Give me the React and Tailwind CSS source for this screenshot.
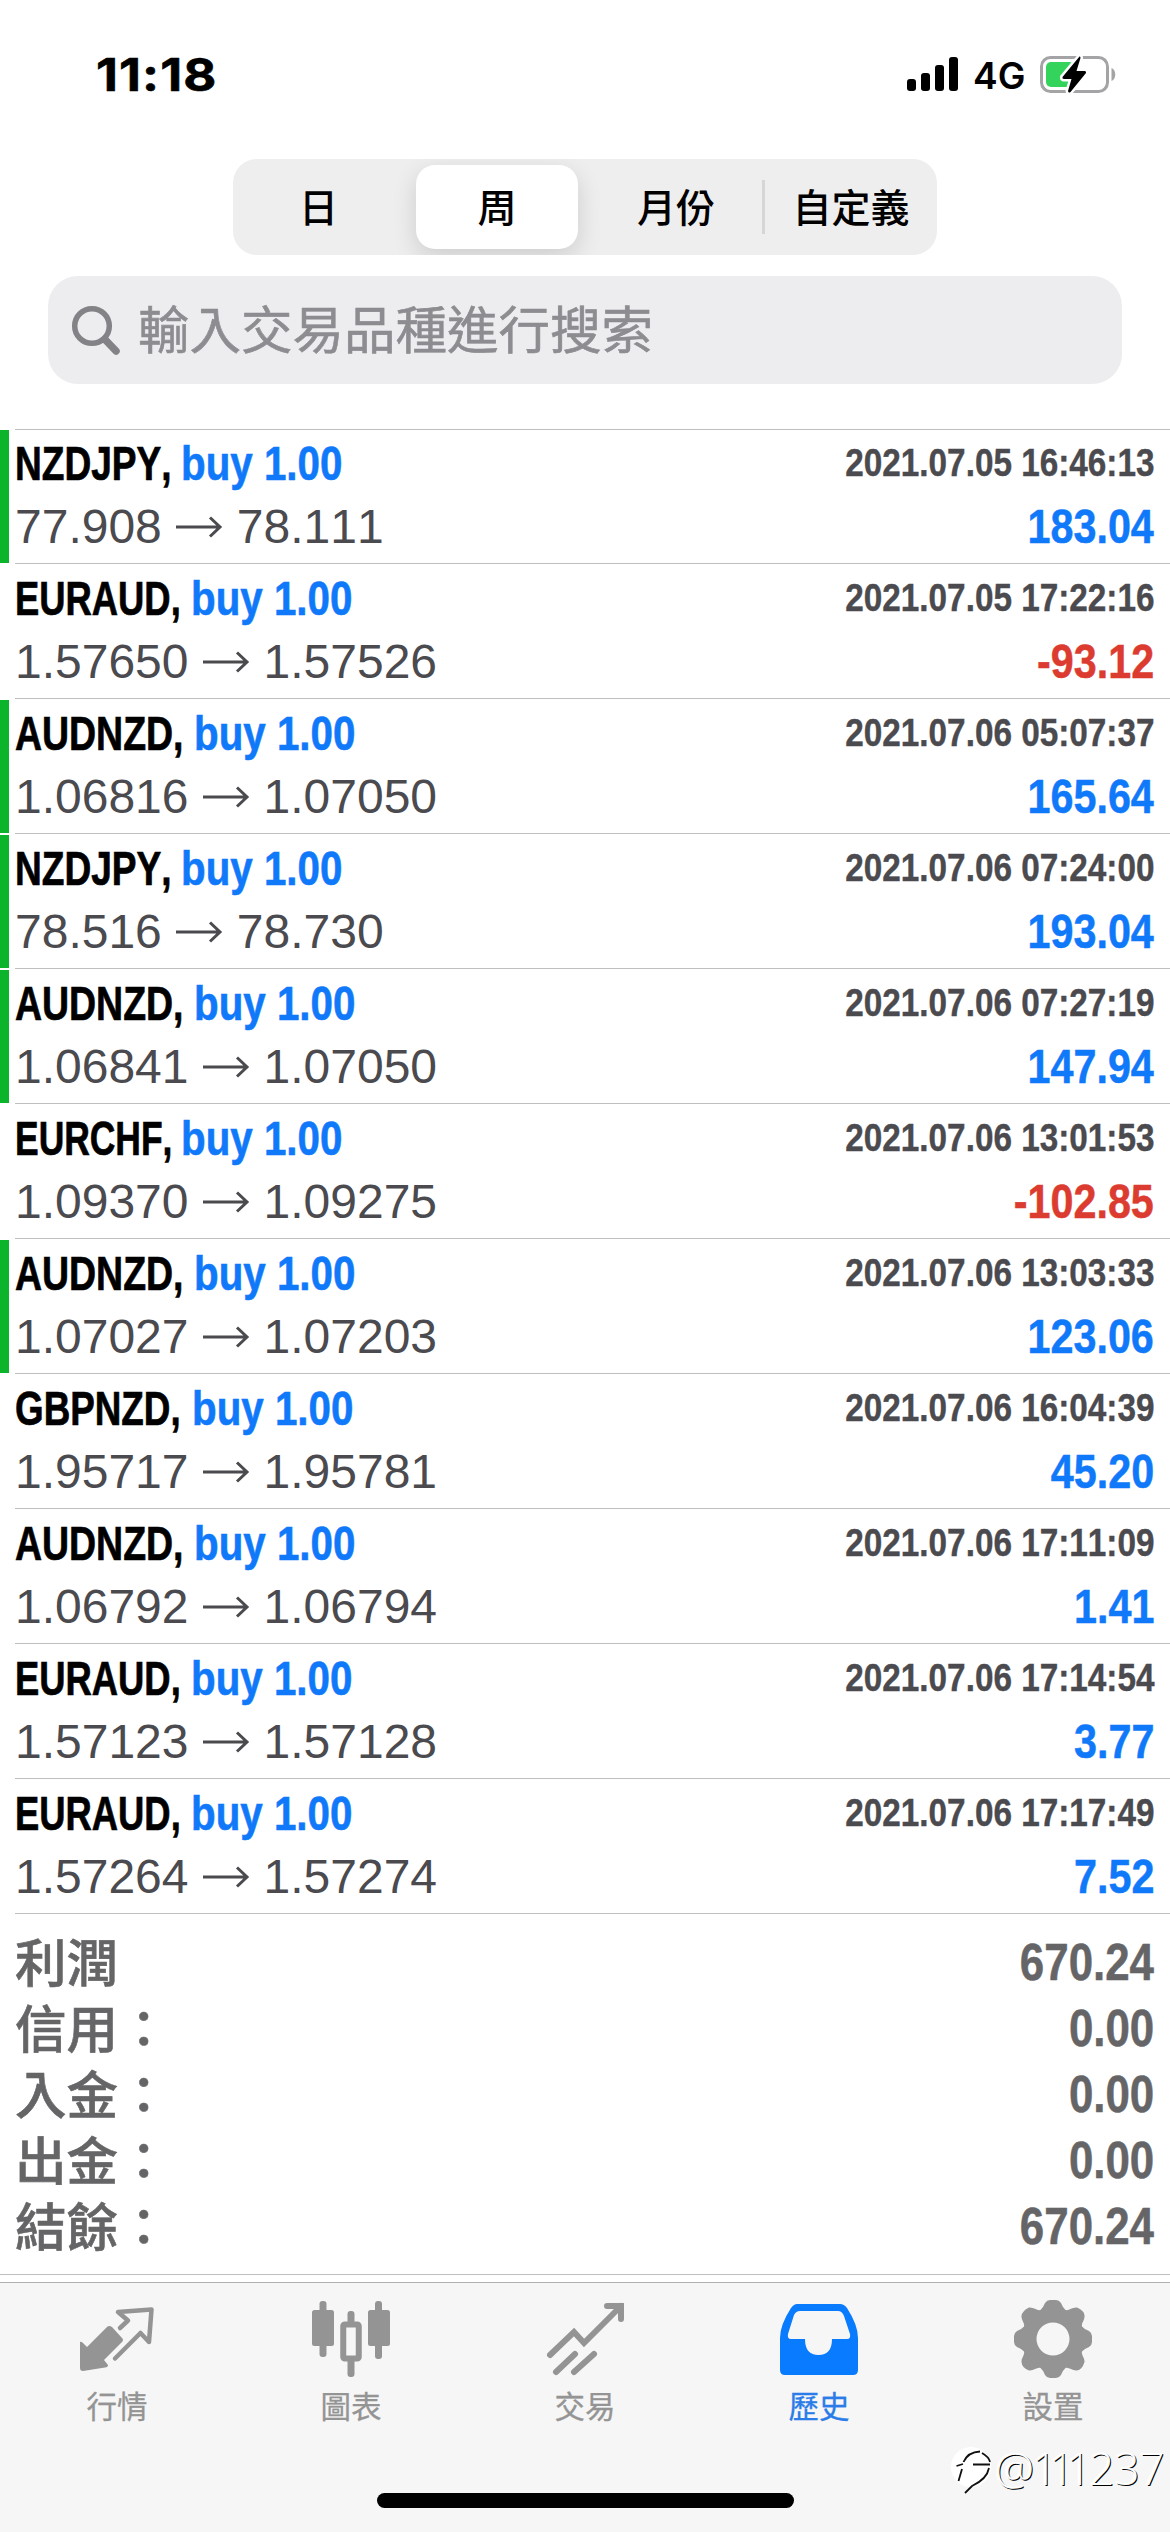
import React from "react";

const trades = [
  ["NZDJPY", "77.908", "78.111", "2021.07.05 16:46:13", "183.04", true],
  ["EURAUD", "1.57650", "1.57526", "2021.07.05 17:22:16", "-93.12", false],
  ["AUDNZD", "1.06816", "1.07050", "2021.07.06 05:07:37", "165.64", true],
  ["NZDJPY", "78.516", "78.730", "2021.07.06 07:24:00", "193.04", true],
  ["AUDNZD", "1.06841", "1.07050", "2021.07.06 07:27:19", "147.94", true],
  ["EURCHF", "1.09370", "1.09275", "2021.07.06 13:01:53", "-102.85", false],
  ["AUDNZD", "1.07027", "1.07203", "2021.07.06 13:03:33", "123.06", true],
  ["GBPNZD", "1.95717", "1.95781", "2021.07.06 16:04:39", "45.20", false],
  ["AUDNZD", "1.06792", "1.06794", "2021.07.06 17:11:09", "1.41", false],
  ["EURAUD", "1.57123", "1.57128", "2021.07.06 17:14:54", "3.77", false],
  ["EURAUD", "1.57264", "1.57274", "2021.07.06 17:17:49", "7.52", false],
];

const symbolWidth = {
  NZDJPY: "w-[166px]",
  EURAUD: "w-[176px]",
  AUDNZD: "w-[179px]",
  EURCHF: "w-[166px]",
  GBPNZD: "w-[177px]",
};

const symbolScale = {
  NZDJPY: "scale-x-[0.772]",
  EURAUD: "scale-x-[0.758]",
  AUDNZD: "scale-x-[0.78]",
  EURCHF: "scale-x-[0.738]",
  GBPNZD: "scale-x-[0.767]",
};

const totals = [
  ["利潤", "670.24"],
  ["信用：", "0.00"],
  ["入金：", "0.00"],
  ["出金：", "0.00"],
  ["結餘：", "670.24"],
];

function StatusBar() {
  return (
    <header className="flex h-[159px] items-start justify-between pl-[96px] pr-[54px]">
      <div className="mt-[47px] origin-left scale-x-[1.13] font-['Inter',sans-serif] text-[45px] font-bold leading-[56px] tracking-[1px] text-black [-webkit-text-stroke:0.6px_#000]">11:18</div>
      <div className="mt-[55px] flex items-start">
        <svg className="mt-[2px]" width="52" height="34" viewBox="0 0 52 34">
          <rect x="0" y="22" width="9" height="12" rx="3" />
          <rect x="14" y="16" width="9" height="18" rx="3" />
          <rect x="28" y="8" width="9" height="26" rx="3" />
          <rect x="42" y="0" width="9" height="34" rx="3" />
        </svg>
        <span className="ml-[14px] w-[67px] font-['Inter',sans-serif] text-[37px] font-semibold leading-[42px] text-black">4G</span>
        <svg width="76" height="40" viewBox="0 0 76 40">
          <rect x="1.5" y="2.5" width="66" height="34" rx="9" fill="none" stroke="#a4a4a6" strokeWidth="3" />
          <path d="M71.500 13 C76.500 15 76.500 24 71.500 26 Z" fill="#a4a4a6" />
          <rect x="6" y="7" width="28" height="25" rx="5" fill="#34d45c" />
          <path d="M39.500 1.500 L22.500 22 Q22 24 24 24 H31.500 L28 36 Q28.500 38.500 30.500 37 L46 18 Q46.500 16 44.500 16 H36.500 L40.500 3 Q40.500 1 39.500 1.500 Z" fill="#000" stroke="#fff" strokeWidth="5" paintOrder="stroke" />
        </svg>
      </div>
    </header>
  );
}

function Segments() {
  return (
    <div className="mx-auto flex h-[96px] w-[704px] items-center overflow-hidden rounded-[24px] bg-[#eeeeee] text-[39px] font-medium leading-[58px] text-black">
      <div className="w-[183px] pb-[4px] pr-[12px] text-center">日</div>
      <div className="flex h-[84px] w-[162px] items-center justify-center rounded-[19px] bg-white pb-[4px] shadow-[0_8px_24px_rgba(0,0,0,0.14)]">周</div>
      <div className="w-[184px] pb-[4px] pl-[12px] text-center">月份</div>
      <div className="h-[54px] w-[3px] bg-[#d6d6d8]" />
      <div className="flex-1 pb-[4px] text-center">自定義</div>
    </div>
  );
}

function Search() {
  return (
    <div className="mx-[48px] mt-[21px] flex h-[108px] items-center rounded-[30px] bg-[#ededef] pl-[23px]">
      <svg width="52" height="58" viewBox="0 0 52 58" fill="none" stroke="#838387">
        <circle cx="21" cy="25" r="17.300" strokeWidth="5.500" />
        <path d="M34 38.500 L45 50" strokeWidth="7.500" strokeLinecap="round" />
      </svg>
      <span className="-mt-[7px] ml-[15px] text-[51.5px] leading-[76px] text-[#8d8d91] [-webkit-text-stroke:0.6px_#8d8d91]">輸入交易品種進行搜索</span>
    </div>
  );
}

function Trade({ row }) {
  const [symbol, from, to, time, profit, marked] = row;
  return (
    <div className="flex h-[135px] font-['Liberation_Sans',Arial,sans-serif]">
      <div className={marked ? "mt-px h-[133px] w-[9px] bg-[#0cb42c]" : "w-[9px]"} />
      <div className="ml-[6px] flex-1 border-b border-[#bfbfc2] pr-[16px] pt-[7px]">
        <div className="flex h-[56px] justify-between whitespace-nowrap font-bold leading-[56px]">
          <div className="flex text-[48px]">
            <div className={symbolWidth[symbol]}>
              <span className={`inline-block origin-left text-black [-webkit-text-stroke:0.7px_#000] [font-kerning:none] ${symbolScale[symbol]}`}>{symbol},</span>
            </div>
            <span className="inline-block origin-left scale-x-[0.84] text-[#0f79fa] [-webkit-text-stroke:0.6px_#0f79fa]">buy 1.00</span>
          </div>
          <span className="mt-[-1px] inline-block origin-right scale-x-[0.865] text-[38.5px] text-[#4a4a4f] [font-kerning:none] [-webkit-text-stroke:0.4px_#4a4a4f]">{time}</span>
        </div>
        <div className="mt-[7px] flex h-[56px] items-center justify-between whitespace-nowrap text-[48px] leading-[56px]">
          <div className="flex items-center text-[#4a4a4f] [font-kerning:none]">
            <span>{from}</span>
            <svg className="ml-[13px] mr-[14px]" width="48" height="22" viewBox="0 0 48 22" fill="none" stroke="currentColor" strokeWidth="3">
              <path d="M1 11 H45 M35 1.500 L45 11 L35 20.500" />
            </svg>
            <span>{to}</span>
          </div>
          <span className={profit.startsWith("-") ? "origin-right scale-x-[0.86] font-bold text-[#dc3b30] [font-kerning:none] [-webkit-text-stroke:0.5px_#dc3b30]" : "origin-right scale-x-[0.86] font-bold text-[#0f79fa] [font-kerning:none] [-webkit-text-stroke:0.5px_#0f79fa]"}>{profit}</span>
        </div>
      </div>
    </div>
  );
}

function Totals() {
  return (
    <section className="h-[361px] border-b border-[#bfbfc2] pl-[15px] pr-[16px] pt-[15px] text-[#656567]">
      {totals.map(([label, value]) => (
        <div key={label} className="flex h-[66px] items-center justify-between leading-[66px]">
          <span className="-mt-[5px] text-[51.5px] font-medium [-webkit-text-stroke:0.6px_#656567]">{label}</span>
          <span className="mt-[2px] origin-right scale-x-[0.86] font-['Liberation_Sans',Arial,sans-serif] text-[51px] font-bold [-webkit-text-stroke:0.5px_#656567]">{value}</span>
        </div>
      ))}
    </section>
  );
}

const icons = {
  quotes: (
    <svg width="78" height="78" viewBox="0 0 78 78" fill="#949494">
      <path d="M2 42 Q3 41 5 43 L9 47 L29 27 Q31 25 34 27 L44 38 Q46 40 44 42 L26 60 L30 65 Q30 67 27 67.500 L5 71 Q2 71 2 68 Z" />
      <path d="M42 28 L50 20.500 L40 12 L73.500 9.500 L71 42 L62.500 33 L37 58.500" fill="none" stroke="#949494" strokeWidth="4.500" strokeLinejoin="round" strokeLinecap="round" />
    </svg>
  ),
  chart: (
    <svg width="78" height="78" viewBox="0 0 78 78" fill="#949494">
      <rect x="7.500" y="1" width="7" height="56" rx="3" />
      <rect x="0" y="10" width="22" height="36" rx="2.500" />
      <rect x="63" y="1" width="7" height="58" rx="3" />
      <rect x="56" y="10" width="22" height="36" rx="2.500" />
      <rect x="35.500" y="11" width="7" height="13" rx="3" />
      <rect x="35.500" y="58" width="7" height="19" rx="3" />
      <rect x="31.250" y="24.500" width="15.500" height="34" rx="1.500" fill="none" stroke="#949494" strokeWidth="6" />
    </svg>
  ),
  trade: (
    <svg width="78" height="78" viewBox="0 0 78 78" fill="none" stroke="#949494" strokeWidth="6" strokeLinecap="round">
      <path d="M4 55 L28 32 L38 43 L75 6 M61 6 H75 V19" />
      <path d="M10 72 L29 54 M28 72 L48 54" />
    </svg>
  ),
  history: (
    <svg width="78" height="78" viewBox="0 0 78 78" fill="#087bfe">
      <path fillRule="evenodd" d="M17 4 H60 Q64 4 67 8 Q78 25 78 38 V70 Q78 75 73 75 H5 Q0 75 0 70 V38 Q0 25 11 8 Q14 4 17 4 Z M20 11 Q16 11 14 15 L8 34 Q7 39 11 39 H25 Q25 55 38.500 55 Q52 55 52 39 H67 Q71 39 70 34 L64 16 Q62 11 58 11 Z" />
    </svg>
  ),
  settings: (
    <svg width="78" height="78" viewBox="-39 -39 78 78" fill="#949494">
      <path fillRule="evenodd" d="M-3 -39 H3 Q6 -39 8 -36 Q10 -31 12.500 -29 C16 -28 19 -32 24 -31.500 Q32 -28 31.500 -23 C32 -19 28 -16 29 -12.500 Q31 -10 36 -8 Q39 -6 39 -3 V3 Q39 6 36 8 Q31 10 29 12.500 C28 16 32 19 31.500 23 Q29 31 24 31.500 C19 32 16 28 12.500 29 Q10 31 8 36 Q6 39 3 39 H-3 Q-6 39 -8 36 Q-10 31 -12.500 29 C-16 28 -19 32 -24 31.500 Q-31 29 -31.500 23 C-32 19 -28 16 -29 12.500 Q-31 10 -36 8 Q-39 6 -39 3 V-3 Q-39 -6 -36 -8 Q-31 -10 -29 -12.500 C-28 -16 -32 -19 -31.500 -23 Q-31 -28 -24 -31.500 C-19 -32 -16 -28 -12.500 -29 Q-10 -31 -8 -36 Q-6 -39 -3 -39 Z M0 -16.500 A16.500 16.500 0 1 0 0 16.500 A16.500 16.500 0 1 0 0 -16.500 Z" />
    </svg>
  ),
};

const tabs = [
  ["行情", "quotes"],
  ["圖表", "chart"],
  ["交易", "trade"],
  ["歷史", "history"],
  ["設置", "settings"],
];

function TabBar() {
  return (
    <nav className="relative mt-[7px] h-[250px] border-t border-[#b0b0b2] bg-[#f6f6f6]">
      <div className="grid grid-cols-5 pt-[17px]">
        {tabs.map(([label, icon]) => (
          <div key={label} className={icon === "history" ? "flex flex-col items-center text-[#2a7de8]" : "flex flex-col items-center text-[#949494]"}>
            {icons[icon]}
            <span className="mt-[5px] text-[30.5px] leading-[44px] [-webkit-text-stroke:0.3px_currentColor]">{label}</span>
          </div>
        ))}
      </div>
      <div className="absolute bottom-[24px] left-[377px] h-[15px] w-[417px] rounded-full bg-black" />
      <div className="absolute left-[951px] top-[163px] flex items-center">
        <svg width="42" height="50" viewBox="0 0 42 50">
          <circle cx="20" cy="21" r="20" fill="#fff" />
          <path d="M12.500 16 Q17 6 29 5.500 M5.500 20 L12 18 M7.500 35 L11 23 M31 7 Q38 11 39 16 M22 18.500 H39 M38 22 Q36 33 21 40 L14 47" fill="none" stroke="#111" strokeWidth="1.800" />
        </svg>
        <span className="-mt-[7px] ml-[2px] flex whitespace-nowrap font-['Open_Sans',sans-serif] text-[44px] font-light leading-[50px] text-white [text-shadow:1px_0.5px_0.5px_#000,-1px_0_1px_#fff]">
          <span>@</span>
          <span className="-ml-[2px] tracking-[-8px]">111</span>
          <span className="ml-[6px]">237</span>
        </span>
      </div>
    </nav>
  );
}

export default function App() {
  return (
    <main className="h-[2532px] w-[1170px] overflow-hidden bg-white font-['Noto_Sans_CJK_TC',sans-serif]" lang="zh-Hant">
      <StatusBar />
      <Segments />
      <Search />
      <div className="ml-[15px] mt-[45px] h-px bg-[#bfbfc2]" />
      <div className="-mt-px">
        {trades.map((row) => (
          <Trade key={row[3]} row={row} />
        ))}
      </div>
      <Totals />
      <TabBar />
    </main>
  );
}
